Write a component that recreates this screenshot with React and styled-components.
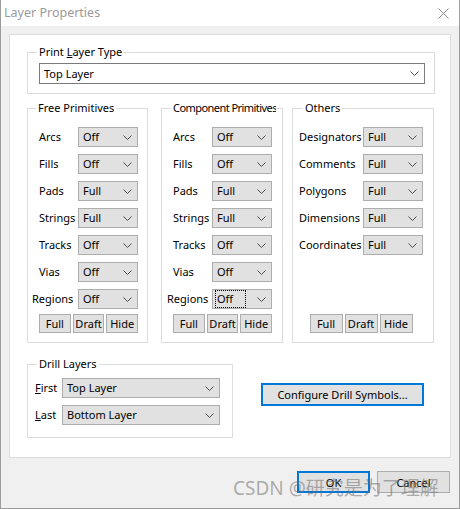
import React from "react";
import styled, { createGlobalStyle } from "styled-components";

const GlobalStyle = createGlobalStyle`
  html, body {
    margin: 0;
    padding: 0;
    background: #fff;
  }
  body {
    font-family: "Noto Sans", "Segoe UI", sans-serif;
    font-size: 11px;
    color: #000;
  }
`;

const freeRows = [
  ["Arcs", "Off"],
  ["Fills", "Off"],
  ["Pads", "Full"],
  ["Strings", "Full"],
  ["Tracks", "Off"],
  ["Vias", "Off"],
  ["Regions", "Off"],
];

const otherRows = [
  ["Designators", "Full"],
  ["Comments", "Full"],
  ["Polygons", "Full"],
  ["Dimensions", "Full"],
  ["Coordinates", "Full"],
];

function Chevron() {
  return (
    <svg width="9" height="5" viewBox="0 0 9 5">
      <polyline
        points="0.5,0.5 4.5,4.5 8.5,0.5"
        fill="none"
        stroke="#4d4d4d"
        strokeWidth="1"
      />
    </svg>
  );
}

function Combo({ value, white, focused }) {
  return (
    <ComboBox $white={white}>
      <ComboText $focused={focused}>{value}</ComboText>
      <Chevron />
    </ComboBox>
  );
}

function Group({ title, indent, tight, children, ...rest }) {
  return (
    <GroupBox {...rest}>
      <Legend $indent={indent} $tight={tight}>{title}</Legend>
      {children}
    </GroupBox>
  );
}

function PrimitiveGroup({ title, rows, labelW, pad, width, ml, focusLast, shift, indent, tight }) {
  return (
    <Group title={title} indent={indent} tight={tight} $width={width} $ml={ml} $pad={pad}>
      <Rows>
        {rows.map(([label, value], i) => {
          const last = i === rows.length - 1;
          return (
            <Row key={label} $label={labelW} $field={60}>
              <Label $shift={last && shift ? shift : 0}>{label}</Label>
              <Combo value={value} focused={last && focusLast} />
            </Row>
          );
        })}
      </Rows>
      <ButtonRow>
        <SmallButton>Full</SmallButton>
        <SmallButton>Draft</SmallButton>
        <SmallButton>Hide</SmallButton>
      </ButtonRow>
    </Group>
  );
}

export default function App() {
  return (
    <>
      <GlobalStyle />
      <Window>
        <TitleBar>
          <Title>Layer Properties</Title>
          <svg width="11" height="11" viewBox="0 0 11 11">
            <path d="M0.5 0.5 L10.5 10.5 M10.5 0.5 L0.5 10.5" stroke="#8a8a8a" strokeWidth="1" />
          </svg>
        </TitleBar>
        <Body>
          <Panel>
            <Group title={<>Print <u>L</u>ayer Type</>} indent={-2} $pad="4px 9px 9px 11px">
              <Combo value="Top Layer" white />
            </Group>

            <Columns>
              <PrimitiveGroup
                title="Free Primitives"
                rows={freeRows}
                labelW={39}
                width={121}
                ml={0}
                pad="12px 9px 9px 11px"
                indent={-3}
                shift={-7}
              />
              <PrimitiveGroup
                title="Component Primitives"
                rows={freeRows}
                labelW={39}
                width={122}
                ml={13}
                pad="12px 10px 9px 11px"
                indent={-2}
                shift={-6}
                tight
                focusLast
              />
              <PrimitiveGroup
                title="Others"
                rows={otherRows}
                labelW={64}
                width={142}
                ml={9}
                pad="12px 10px 9px 6px"
                indent={4}
              />
            </Columns>

            <DrillRow>
              <Group title="Drill Layers" indent={2} $width={206} $pad="7px 11px 12px 7px">
                <Rows>
                  <Row $label={27} $field={158}>
                    <Label><u>F</u>irst</Label>
                    <Combo value="Top Layer" />
                  </Row>
                  <Row $label={27} $field={158}>
                    <Label><u>L</u>ast</Label>
                    <Combo value="Bottom Layer" />
                  </Row>
                </Rows>
              </Group>
              <WideButton $primary>Configure Drill Symbols...</WideButton>
            </DrillRow>
          </Panel>

          <Footer>
            <DialogButton $primary>OK</DialogButton>
            <DialogButton>Cancel</DialogButton>
          </Footer>
        </Body>
        <Watermark>CSDN @研究是为了理解</Watermark>
      </Window>
    </>
  );
}

const Window = styled.div`
  position: relative;
  width: 460px;
  height: 509px;
  box-sizing: border-box;
  background: #f0f0f0;
  border: 1px solid #9c9c9c;
  border-top: none;
  display: flex;
  flex-direction: column;
  overflow: hidden;
`;

const TitleBar = styled.div`
  height: 26px;
  flex: none;
  background: #fff;
  display: flex;
  align-items: center;
  justify-content: space-between;
  padding: 0 10px 0 3px;
`;

const Title = styled.span`
  font-size: 12.5px;
  color: #9a9a9a;
  margin-top: -1px;
`;

const Body = styled.div`
  flex: 1;
  padding: 8px 8px 0 8px;
  display: flex;
  flex-direction: column;
`;

const Panel = styled.div`
  background: #fff;
  border: 1px solid #dcdcdc;
  padding: 10px 15px 19px 17px;
  display: flex;
  flex-direction: column;
`;

const GroupBox = styled.fieldset`
  margin: 0;
  margin-left: ${(p) => p.$ml || 0}px;
  min-width: 0;
  width: ${(p) => (p.$width ? `${p.$width}px` : "auto")};
  box-sizing: border-box;
  border: 1px solid #dcdcdc;
  padding: ${(p) => p.$pad};
  display: flex;
  flex-direction: column;
`;

const Legend = styled.legend`
  padding: 0 2px;
  margin-left: ${(p) => p.$indent}px;
  font-size: 11px;
  line-height: 14px;
  letter-spacing: ${(p) => (p.$tight ? "-0.55px" : "normal")};
  white-space: nowrap;
  overflow: hidden;
  max-width: calc(100% - ${(p) => p.$indent}px);
  u {
    text-decoration-thickness: 1px;
  }
`;

const Columns = styled.div`
  display: flex;
  align-items: stretch;
  margin-top: 7px;
`;

const Rows = styled.div`
  display: flex;
  flex-direction: column;
  gap: 7px;
`;

const Row = styled.div`
  display: grid;
  grid-template-columns: ${(p) => p.$label}px ${(p) => p.$field}px;
  align-items: center;
  height: 20px;
`;

const Label = styled.span`
  white-space: nowrap;
  margin-left: ${(p) => p.$shift || 0}px;
  line-height: 14px;
`;

const ComboBox = styled.div`
  box-sizing: border-box;
  height: ${(p) => (p.$white ? 21 : 20)}px;
  display: flex;
  align-items: center;
  justify-content: space-between;
  padding: 0 5px 0 3px;
  background: ${(p) => (p.$white ? "#fff" : "#e1e1e1")};
  border: 1px solid ${(p) => (p.$white ? "#7a7a7a" : "#adadad")};
  font-size: 11px;
`;

const ComboText = styled.span`
  flex: 1;
  line-height: 14px;
  padding: 1px;
  margin-right: 12px;
  outline: ${(p) => (p.$focused ? "1px dotted #000" : "none")};
`;

const ButtonRow = styled.div`
  display: flex;
  justify-content: center;
  gap: 2px;
  margin-top: auto;
  padding-top: 5px;
`;

const BaseButton = styled.button`
  box-sizing: border-box;
  font-family: inherit;
  font-size: 11px;
  color: #000;
  background: #e1e1e1;
  border: ${(p) => (p.$primary ? "2px solid #0078d7" : "1px solid #adadad")};
  padding: 0;
  margin: 0;
  display: flex;
  align-items: center;
  justify-content: center;
`;

const SmallButton = styled(BaseButton)`
  width: 33px;
  height: 19px;
`;

const DrillRow = styled.div`
  display: flex;
  align-items: flex-start;
  margin-top: 14px;
`;

const WideButton = styled(BaseButton)`
  width: 163px;
  height: 23px;
  margin-left: 28px;
  margin-top: 26px;
`;

const Footer = styled.div`
  display: flex;
  justify-content: flex-end;
  gap: 7px;
  padding: 13px 1px 0 0;
`;

const DialogButton = styled(BaseButton)`
  width: 73px;
  height: 22px;
`;

const Watermark = styled.div`
  position: absolute;
  left: 232px;
  top: 476px;
  font-family: "Noto Sans", "Noto Sans CJK SC", sans-serif;
  font-size: 19px;
  line-height: 24px;
  color: rgba(110, 110, 110, 0.55);
  white-space: nowrap;
  pointer-events: none;
`;
